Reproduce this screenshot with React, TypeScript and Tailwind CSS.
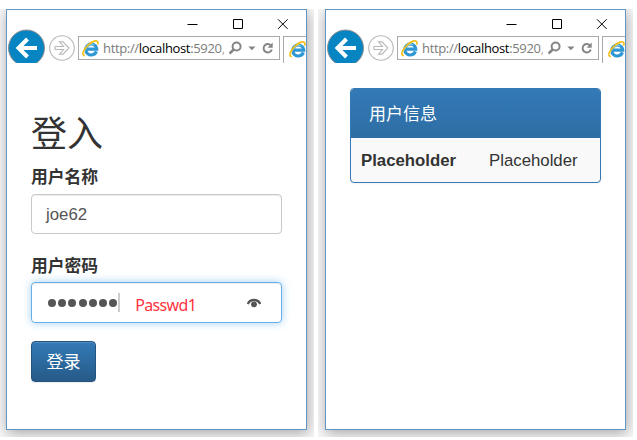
import type { ReactNode } from "react";

function IeLogo() {
  return (
    <svg className="h-[17px] w-[17px] shrink-0" viewBox="0 0 16 16" fill="none">
      <path d="M13.600 10.700A5.200 5.200 0 1 1 13.900 8.600H5" stroke="#2f97d4" strokeWidth="2.900" />
      <path d="M4 7A4.700 4.700 0 0 1 11.500 4.800" stroke="#72cdf3" strokeWidth="1" />
      <path d="M2.6 14.7C-.8 14.2 1.200 9 5.400 4.900 9.600.9 14.400-.4 15 2c.2.9 0 1.600-.4 2.300" stroke="#f3bd12" strokeWidth="1.500" />
      <path d="M1.600 12.700C2 9.900 6.300 4.500 10.500 2.600" stroke="#ffe36b" strokeWidth=".5" />
    </svg>
  );
}

function Browser({ children }: { children: ReactNode }) {
  return (
    <div className="h-[421px] w-[301px] shrink-0 overflow-hidden border border-[#6096c3] bg-white shadow-[1px_3px_13px_rgba(0,0,0,0.34)]">
      <div className="flex h-[53px]">
        <div className="flex w-[71px] shrink-0 items-end">
          <svg className="h-[34px] w-[38px] shrink-0" viewBox="0 0 38 34">
            <circle cx="19.500" cy="19" r="18" fill="#0785c3" stroke="#8f8f8f" strokeWidth="1" />
            <path d="M30 19H12M20.500 10 11.500 19l9 9" fill="none" stroke="#fff" strokeWidth="4" />
          </svg>
          <svg className="mb-[2px] ml-[4px] h-[26px] w-[26px] shrink-0" viewBox="0 0 26 26" fill="none" stroke="#b8b8b8">
            <circle cx="13" cy="13" r="12.300" strokeWidth="1.100" />
            <path d="M6 11.500h8.500l-4-4.600h3.500l6 6.100-6 6.100h-3.500l4-4.600H6z" strokeWidth="1.100" />
          </svg>
        </div>
        <div className="min-w-0 flex-1">
          <div className="flex h-[26px] items-start justify-end gap-[34px] pt-[9px] pr-[18px]">
            <svg className="h-[11px] w-[11px]" viewBox="0 0 11 11"><path d="M.5 5.500h10" stroke="#000" /></svg>
            <svg className="h-[11px] w-[11px]" viewBox="0 0 11 11"><path d="M1.500.5h9v9h-9z" fill="none" stroke="#000" /></svg>
            <svg className="h-[11px] w-[11px]" viewBox="0 0 11 11"><path d="m1 .3 9.600 9.600m0-9.600L1 9.900" stroke="#000" /></svg>
          </div>
          <div className="flex h-[27px] w-[240px] items-start">
            <div className="flex h-6 w-[202px] shrink-0 items-center border border-[#aaa] pl-[3px]">
              <IeLogo />
              <span className="ml-[4px] w-[121px] shrink-0 overflow-hidden font-['Open_Sans','Noto_Sans',sans-serif] text-[13px] leading-[22px] tracking-[-0.34px] whitespace-nowrap text-[#7b7b7b]">
                http://<span className="text-black">localhost</span>:5920<span className="text-[#aaa]">,</span>
              </span>
              <svg className="ml-[4px] h-[14px] w-[14px] shrink-0" viewBox="0 0 14 14" fill="none" stroke="#858585">
                <circle cx="8.600" cy="5.500" r="4" strokeWidth="2" />
                <path d="M5.700 8.500 1.600 12.500" strokeWidth="2.500" />
              </svg>
              <svg className="ml-[6px] h-[5px] w-[8px] shrink-0" viewBox="0 0 8 5"><path d="M.3.5h7.200L3.900 4.300z" fill="#858585" /></svg>
              <svg className="ml-[6px] h-[13px] w-[12px] shrink-0" viewBox="0 0 12 13" fill="none">
                <path d="M8.800 3.300A4.200 4.200 0 1 0 9.800 7.500" stroke="#858585" strokeWidth="2" />
                <path d="M10.700.5v5.300H5.600z" fill="#858585" />
              </svg>
            </div>
            <div className="ml-[3px] h-[27px] w-[35px] shrink-0 border-t border-l border-[#aaa] pt-[4px] pl-[5px]">
              <IeLogo />
            </div>
          </div>
        </div>
      </div>
      {children}
    </div>
  );
}

const dots = [0, 1, 2, 3, 4, 5, 6];

export default function App() {
  return (
    <div className="flex h-[440px] w-[637px] gap-1 overflow-hidden bg-white pt-[9px] font-['Liberation_Sans','Noto_Sans_CJK_SC',sans-serif] text-[17px] text-[#333]">
      <div className="h-[428px] w-[314px] overflow-hidden bg-[#f8f8f8] pl-[6px]">
        <Browser>
          <div className="flex flex-col items-start px-6 pt-[50px]">
            <h2 className="h-[53px] text-[36px] leading-[44px] font-normal">登入</h2>
            <label className="h-[28px] text-[16.800px] leading-6 font-bold">用户名称</label>
            <div className="h-10 w-[251px] rounded-[4px] border border-[#c9c9c9] pl-[14px] text-[16.800px] leading-[40px] text-[#555] shadow-[inset_0_1px_1px_rgba(0,0,0,0.075)]">joe62</div>
            <label className="mt-[21px] h-[27px] text-[16.800px] leading-6 font-bold">用户密码</label>
            <div className="flex h-[41px] w-[251px] items-center rounded-[4px] border border-[#66afe9] pl-[16px] shadow-[inset_0_1px_1px_rgba(0,0,0,0.075),0_0_8px_rgba(102,175,233,0.6)]">
              <div className="flex gap-[2.200px]">
                {dots.map((dot) => <span key={dot} className="h-2 w-2 rounded-full bg-[#555]" />)}
              </div>
              <span className="ml-px h-[19px] w-[2px] bg-[#ccc]" />
              <span className="mt-[5px] ml-[15px] w-[66px] font-['Noto_Sans',sans-serif] text-[16px] leading-5 tracking-[-0.65px] text-[#ff3340]">Passwd1</span>
              <svg className="ml-[46px] h-[10px] w-[14px]" viewBox="0 0 14 10" fill="none">
                <path d="M.8 6C3.100.6 10.900.6 13.200 6" stroke="#555" strokeWidth="2.400" />
                <circle cx="7" cy="6.300" r="2.900" fill="#555" />
              </svg>
            </div>
            <button className="mt-[18px] h-[41px] w-[65px] rounded-[4px] border border-[#245580] bg-linear-to-b from-[#337ab7] to-[#265a88] text-[17px] leading-[38px] text-white shadow-[inset_0_1px_0_rgba(255,255,255,0.15),0_1px_1px_rgba(0,0,0,0.075)]"><span className="block pt-[2px]">登录</span></button>
          </div>
        </Browser>
      </div>
      <div className="h-[428px] w-[315px] overflow-hidden bg-[#f8f8f8] pl-[7px]">
        <Browser>
          <div className="px-6 pt-[25px]">
            <div className="h-[95px] w-[251px] overflow-hidden rounded-[4px] border border-[#337ab7] bg-[#f9f9f9] shadow-[0_1px_2px_rgba(0,0,0,0.05)]">
              <div className="h-[49px] bg-linear-to-b from-[#337ab7] to-[#2e6da4] pl-[18px] text-[17px] leading-[51px] text-white">用户信息</div>
              <div className="flex h-11 items-center pt-[2px] pl-[10px] text-[16.800px]">
                <strong className="w-[128px]">Placeholder</strong>
                <span>Placeholder</span>
              </div>
            </div>
          </div>
        </Browser>
      </div>
    </div>
  );
}
